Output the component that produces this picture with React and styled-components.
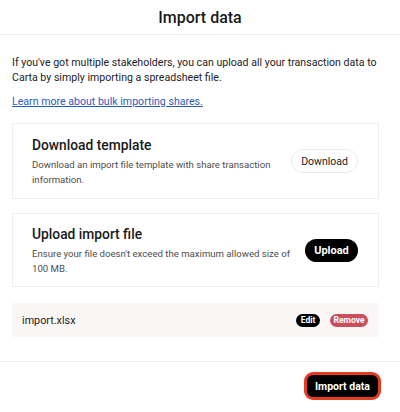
import React from 'react'
import styled, { createGlobalStyle } from 'styled-components'

const Global = createGlobalStyle`
    html, body {
        margin: 0;
        padding: 0;
        background: #fff;
    }
    body {
        font-family: Roboto, "Noto Sans", sans-serif;
        color: #1a1a1a;
        -webkit-font-smoothing: antialiased;
    }
`

const Modal = styled.div`
    width: 400px;
    height: 412px;
    display: flex;
    flex-direction: column;
`

const Header = styled.header`
    height: 34px;
    border-bottom: 1px solid #eef0f3;
    display: flex;
    align-items: center;
    justify-content: center;
`

const Title = styled.h1`
    margin: 0;
    font-size: 16px;
    font-weight: 500;
`

const Body = styled.div`
    flex: 1;
    padding: 20px 21px 0 12px;
    display: flex;
    flex-direction: column;
`

const Intro = styled.p`
    margin: 0;
    font-size: 10.6px;
    line-height: 15px;
    color: #222;
`

const Link = styled.a`
    margin-top: 9px;
    font-size: 10.6px;
    line-height: 15px;
    color: #2c5bbd;
    text-decoration: underline;
    align-self: flex-start;
`

const Card = styled.section`
    margin-top: ${p => p.$gap}px;
    border: 1px solid #eceef1;
    padding: 0 20px 0 19px;
    height: ${p => p.$h}px;
    box-sizing: border-box;
    display: flex;
    align-items: center;
    justify-content: space-between;
    gap: 4px;
`

const CardText = styled.div`
    flex: 1;
    min-width: 0;
    max-width: 266px;
`

const CardTitle = styled.h2`
    margin: 0 0 3px;
    font-size: 13.8px;
    font-weight: 500;
    line-height: 18px;
`

const CardDesc = styled.p`
    margin: 0;
    font-size: 9.6px;
    line-height: 15px;
    color: #4d4d4d;
`

const PillButton = styled.button`
    font-family: inherit;
    border-radius: 999px;
    cursor: pointer;
    flex-shrink: 0;
    height: ${p => p.$h || 24}px;
    width: ${p => (p.$w ? `${p.$w}px` : 'auto')};
    padding: 0;
    font-size: ${p => p.$fs || '11px'};
    font-weight: ${p => (p.$dark || p.$bg ? 700 : 400)};
    background: ${p => p.$bg || (p.$dark ? '#000' : '#fff')};
    color: ${p => (p.$dark || p.$bg ? '#fff' : '#222')};
    border: 1px solid ${p => (p.$dark || p.$bg ? 'transparent' : '#e9e9e9')};
`

const FileRow = styled.div`
    margin-top: 16px;
    height: 34px;
    background: #faf6f5;
    display: flex;
    align-items: center;
    padding: 0 11px 0 10px;
    gap: 10px;
`

const FileName = styled.span`
    flex: 1;
    font-size: 10.8px;
    color: #222;
`

const Footer = styled.footer`
    height: 48px;
    border-top: 1px solid #eef0f3;
    display: flex;
    align-items: center;
    justify-content: flex-end;
    padding: 0 22px 2px 12px;
`

const PrimaryButton = styled.button`
    font-family: inherit;
    height: 22px;
    width: 71px;
    padding: 0;
    border-radius: 6px;
    background: #000;
    color: #fff;
    font-size: 10.5px;
    font-weight: 700;
    border: none;
    box-shadow: 0 0 0 3px #e53b1f;
    cursor: pointer;
`

export default function App() {
    return (
        <Modal>
            <Global />
            <Header>
                <Title>Import data</Title>
            </Header>
            <Body>
                <Intro>
                    If you've got multiple stakeholders, you can upload all your transaction data to
                    Carta by simply importing a spreadsheet file.
                </Intro>
                <Link href="#">Learn more about bulk importing shares.</Link>

                <Card $gap={14} $h={76}>
                    <CardText>
                        <CardTitle>Download template</CardTitle>
                        <CardDesc>Download an import file template with share transaction information.</CardDesc>
                    </CardText>
                    <PillButton $w={67} $fs="10.5px">Download</PillButton>
                </Card>

                <Card $gap={14} $h={74}>
                    <CardText>
                        <CardTitle>Upload import file</CardTitle>
                        <CardDesc>Ensure your file doesn't exceed the maximum allowed size of 100 MB.</CardDesc>
                    </CardText>
                    <PillButton $dark $h={23} $w={53} $fs="11px">Upload</PillButton>
                </Card>

                <FileRow>
                    <FileName>import.xlsx</FileName>
                    <PillButton $dark $h={13} $w={24} $fs="8.5px">Edit</PillButton>
                    <PillButton $bg="#c94f5d" $h={13} $w={38} $fs="8.5px">Remove</PillButton>
                </FileRow>
            </Body>
            <Footer>
                <PrimaryButton>Import data</PrimaryButton>
            </Footer>
        </Modal>
    )
}
